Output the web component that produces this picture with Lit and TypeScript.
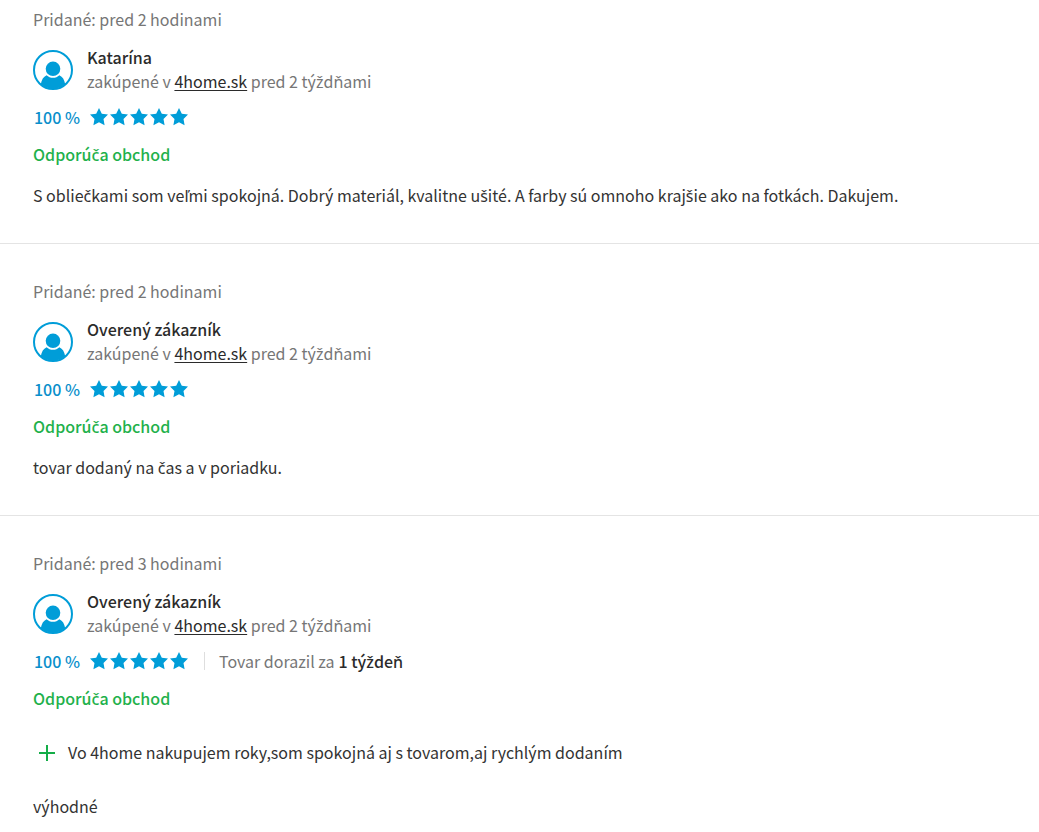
import { LitElement, html, css, svg, nothing } from "lit";
import { customElement, property } from "lit/decorators.js";

interface Review {
  added: string;
  author: string;
  shop: string;
  bought: string;
  score: number;
  stars: number;
  delivery?: string;
  pros?: string[];
  text: string;
}

const reviews: Review[] = [
  {
    added: "pred 2 hodinami",
    author: "Katarína",
    shop: "4home.sk",
    bought: "pred 2 týždňami",
    score: 100,
    stars: 5,
    text: "S obliečkami som veľmi spokojná. Dobrý materiál, kvalitne ušité. A farby sú omnoho krajšie ako na fotkách. Dakujem.",
  },
  {
    added: "pred 2 hodinami",
    author: "Overený zákazník",
    shop: "4home.sk",
    bought: "pred 2 týždňami",
    score: 100,
    stars: 5,
    text: "tovar dodaný na čas a v poriadku.",
  },
  {
    added: "pred 3 hodinami",
    author: "Overený zákazník",
    shop: "4home.sk",
    bought: "pred 2 týždňami",
    score: 100,
    stars: 5,
    delivery: "1 týždeň",
    pros: ["Vo 4home nakupujem roky,som spokojná aj s tovarom,aj rychlým dodaním"],
    text: "výhodné",
  },
];

const star = svg`<path d="M9 0 L11.8 5.7 L18 6.6 L13.5 11 L14.6 17.2 L9 14.3 L3.4 17.2 L4.5 11 L0 6.6 L6.2 5.7 Z" />`;

// The main family has no ready-made letters with a caron, so those take the second one.
const slovak = (text: string) =>
  text
    .split(/([čďľňšťž]+)/i)
    .map((part, i) => (i % 2 ? html`<span class="caron">${part}</span>` : part));

@customElement("shop-review")
export class ShopReview extends LitElement {
  @property({ attribute: false }) review!: Review;

  static styles = css`
    :host {
      display: block;
    }
    .review {
      display: flex;
      flex-direction: column;
      padding: 0 33px 36px;
    }
    p {
      margin: 0;
    }
    .caron {
      font-family: "Noto Sans", sans-serif;
      line-height: 1;
    }
    .added,
    .bought,
    .delivery {
      color: #767676;
    }
    .user {
      display: flex;
      align-items: flex-start;
      gap: 14px;
      margin-top: 14px;
    }
    .avatar {
      flex: none;
      width: 40px;
      height: 40px;
      margin-top: 5px;
      color: #009dd8;
    }
    .author,
    .delivery b {
      font-weight: 500;
      color: #2b2b2b;
    }
    .shop {
      color: #2b2b2b;
      text-decoration: underline;
      text-decoration-thickness: 1px;
      text-underline-offset: 2px;
    }
    .rating {
      display: flex;
      align-items: center;
      margin-top: 12px;
      padding-left: 1px;
    }
    .score {
      color: #0a8fcb;
      font-weight: 500;
    }
    .stars {
      display: flex;
      gap: 2px;
      margin-left: 10px;
      fill: #009dd8;
    }
    .stars svg {
      width: 18px;
      height: 18px;
    }
    .delivery {
      display: flex;
      align-items: center;
      gap: 4px;
    }
    .delivery::before {
      content: "";
      width: 1px;
      height: 18px;
      margin: 0 10px 0 16px;
      background: #dedede;
    }
    .recommends {
      margin-top: 13px;
      color: #1fb14c;
      font-weight: 500;
    }
    .pros {
      list-style: none;
      margin: 30px 0 13px;
      padding: 0 0 0 6px;
    }
    .pros li {
      display: flex;
      align-items: flex-start;
      gap: 13px;
    }
    .pros svg {
      flex: none;
      width: 16px;
      height: 16px;
      margin-top: 5px;
      stroke: #14ad48;
      stroke-width: 2;
    }
    .text {
      margin-top: 17px;
    }
  `;

  render() {
    const r = this.review;
    return html`
      <article class="review">
        <p class="added">Pridané: ${r.added}</p>
        <div class="user">
          <svg class="avatar" viewBox="0 0 40 40" aria-hidden="true">
            <circle cx="20" cy="20" r="19" fill="none" stroke="currentColor" stroke-width="2" />
            <circle cx="20" cy="18.8" r="7.3" fill="currentColor" />
            <path
              d="M7.8 34.2 C8.6 29.8 10.4 26.6 13.6 25.2 C17 28.6 23 28.6 26.4 25.2 C29.6 26.6 31.4 29.8 32.2 34.2 C29 37 25 38.4 20 38.4 C15 38.4 11 37 7.8 34.2 Z"
              fill="currentColor"
            />
          </svg>
          <div>
            <div class="author">${slovak(r.author)}</div>
            <div class="bought">zakúpené v <a class="shop" href="#">${r.shop}</a> ${slovak(r.bought)}</div>
          </div>
        </div>
        <div class="rating">
          <span class="score">${r.score} %</span>
          <span class="stars" role="img" aria-label="${r.stars} / 5">
            ${Array.from({ length: r.stars }, () => html`<svg viewBox="0 0 18 18">${star}</svg>`)}
          </span>
          ${r.delivery
            ? html`<span class="delivery"><span>Tovar dorazil za</span> <b>${slovak(r.delivery)}</b></span>`
            : nothing}
        </div>
        <p class="recommends">${slovak("Odporúča obchod")}</p>
        ${r.pros
          ? html`<ul class="pros">
              ${r.pros.map(
                (pro) => html`<li>
                  <svg viewBox="0 0 16 16" aria-hidden="true"><path d="M8 0 V16 M0 8 H16" /></svg>
                  <span>${slovak(pro)}</span>
                </li>`
              )}
            </ul>`
          : nothing}
        <p class="text">${slovak(r.text)}</p>
      </article>
    `;
  }
}

@customElement("app-root")
export class AppRoot extends LitElement {
  static styles = css`
    :host {
      display: block;
      padding-top: 7px;
      background: #fff;
      color: #333;
      font-family: "Noto Sans CJK SC", "Noto Sans", sans-serif;
      font-size: 16px;
      line-height: 24px;
    }
    shop-review + shop-review {
      padding-top: 35px;
      border-top: 1px solid #e4e4e4;
    }
  `;

  render() {
    return html`${reviews.map((r) => html`<shop-review .review=${r}></shop-review>`)}`;
  }
}
